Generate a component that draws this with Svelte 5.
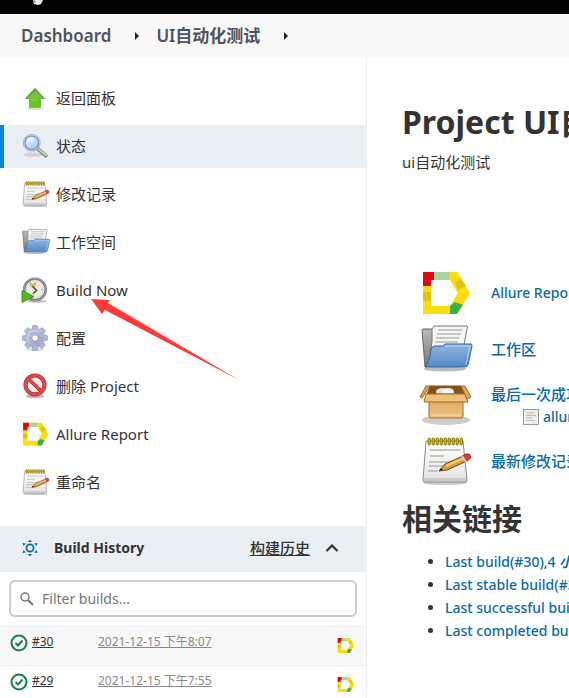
<script>
    const tasks = [
        { label: '返回面板', icon: 'up' },
        { label: '状态', icon: 'search', active: true },
        { label: '修改记录', icon: 'notepad' },
        { label: '工作空间', icon: 'folder' },
        { label: 'Build Now', icon: 'clock' },
        { label: '配置', icon: 'gear' },
        { label: '删除 Project', icon: 'forbidden' },
        { label: 'Allure Report', icon: 'allure' },
        { label: '重命名', icon: 'notepad' }
    ];

    const builds = [
        { id: '#30', date: '2021-12-15 下午8:07' },
        { id: '#29', date: '2021-12-15 下午7:55' }
    ];

    const permalinks = [
        { name: 'Last build(#30),4', age: '小时 22 分之前' },
        { name: 'Last stable build(#30),4', age: '小时 22 分之前' },
        { name: 'Last successful build(#30),4', age: '小时 22 分之前' },
        { name: 'Last completed build(#30),4', age: '小时 22 分之前' }
    ];

    const teeth = [0, 45, 90, 135, 180, 225, 270, 315];
    const rings = [7, 11, 15, 19, 23, 27, 31, 35, 39];

    let filter = $state('');
    let open = $state(true);
    let visible = $derived(builds.filter((b) => (b.id + b.date).includes(filter)));
</script>

{#snippet icon(name)}
    <svg class="icon" viewBox="0 0 48 48" aria-hidden="true">
        {#if name === 'up'}
            <ellipse cx="24" cy="43" rx="17" ry="3" fill="#ddd" />
            <path d="M24 6 42 25H34V41H14V25H6Z" fill="url(#green)" stroke="#5b9e3c" stroke-width="1.5" stroke-linejoin="round" />
            <path d="M24 9 38 24H32V31Q23 28 16 32V24H10Z" fill="#fff" opacity=".15" />
        {:else if name === 'search'}
            <ellipse cx="20" cy="40" rx="18" ry="4" fill="#cfd3d4" />
            <path d="M29 29 44 42" stroke="#8b8f8c" stroke-width="7" stroke-linecap="round" />
            <path d="M31 30 44 41" stroke="#d5d7d3" stroke-width="3" stroke-linecap="round" />
            <circle cx="18" cy="18" r="15.5" fill="#d9dddd" stroke="#9a9fa3" stroke-width="1.5" />
            <circle cx="18" cy="18" r="12.5" fill="url(#lens)" stroke="#5f8bc4" stroke-width="2" />
            <path d="M9 18Q10 9 19 9Q23 13 18 16Q13 16 9 18Z" fill="#fff" opacity=".6" />
        {:else if name === 'notepad'}
            <ellipse cx="24" cy="46" rx="22" ry="2" fill="#ccc" />
            <path d="M5 4H42L46 43Q46 45 44 45H4Q2 45 2 43Z" fill="url(#paper)" stroke="#888a85" />
            <path d="M3 41H45V44H3Z" fill="#c9cac7" />
            {#each rings as x}
                <rect {x} y="1" width="2.5" height="7" rx="1.2" fill="#d2b51b" stroke="#77670b" stroke-width=".8" />
            {/each}
            <path d="M9 13H39M9 19H23M8 25H37M8 29H25M7 34H17" stroke="#b5b6b3" stroke-width="1.3" />
            <path d="M18 34 24 27 42 19 46 24 26 33Z" fill="#d99b35" stroke="#704b16" />
            <path d="M25 29 43 21" stroke="#f7ce79" stroke-width="2" />
            <path d="M41 19 45 17Q50 16 50 21L45 25Z" fill="#df3b32" stroke="#a11d20" stroke-width=".7" />
            <path d="M41 19 45 25" stroke="#ccd" stroke-width="2" />
            <path d="M18 34 20 31 22 33Z" fill="#222" />
        {:else if name === 'folder'}
            <ellipse cx="24" cy="44" rx="21" ry="2.5" fill="#bbb" />
            <path d="M1 5Q1 4 2 4H14L16 8H41V36L4 42Z" fill="url(#steel)" stroke="#666" />
            <path d="M13 1H46Q47 2 46 4L41 30H9Q12 16 11 4Z" fill="#f5f5f4" stroke="#777" />
            <path d="M17 5H41M16 9H40M15 13H38M14 17H37" stroke="#b9b9b9" stroke-width="1.5" />
            <path d="M24 19H50Q51 19 51 21L47 40Q46 42 44 42H4Q8 38 10 25Q10 22 13 21H22Z" fill="url(#blue)" stroke="#3465a4" />
            <path d="M24 21H49L45 40" fill="none" stroke="#b8d2ef" />
        {:else if name === 'clock'}
            <ellipse cx="28" cy="45" rx="17" ry="2" fill="#bbb" />
            <circle cx="24" cy="23" r="20" fill="#ececdf" stroke="#77728d" stroke-width="4.5" />
            <circle cx="24" cy="23" r="20.5" fill="none" stroke="#aaa6bb" stroke-width="1.5" />
            <circle cx="24" cy="23" r="16" fill="none" stroke="#c8c5b9" stroke-width="1" />
            <path d="M14 9 20 14 25 10 24 18H17Z" fill="#e9c542" stroke="#b99b3e" />
            <path d="M19 17 27 25 20 31" fill="none" stroke="#444" stroke-width="2.5" />
            <circle cx="37" cy="23" r="1.5" fill="#999" />
            <path d="M0 25 22 36 0 47Z" fill="#50bd1e" stroke="#378516" stroke-width="1.5" />
        {:else if name === 'gear'}
            <ellipse cx="24" cy="45" rx="18" ry="3" fill="#ddd" />
            {#each teeth as angle}
                <path d="M17 13 20 1H28L31 13Z" fill="#b1b8d6" stroke="#8088ad" transform="rotate({angle} 24 24)" />
            {/each}
            <circle cx="24" cy="24" r="16" fill="url(#metal)" />
            <circle cx="24" cy="24" r="10" fill="none" stroke="#a3abcd" stroke-width="2" />
            <circle cx="24" cy="24" r="6" fill="#fff" stroke="#7b83aa" stroke-width="1.5" />
        {:else if name === 'forbidden'}
            <ellipse cx="24" cy="43" rx="17" ry="3.5" fill="#bbb" />
            <circle cx="24" cy="22" r="17.5" fill="#f4eeee" stroke="#b8252a" stroke-width="7.5" />
            <path d="M11 10 37 35" stroke="#bd1d22" stroke-width="6.5" />
            <circle cx="24" cy="22" r="17.5" fill="none" stroke="#dc4a4f" stroke-width="5" />
            <path d="M11 10 37 35" stroke="#dc4a4f" stroke-width="4.5" />
        {:else if name === 'allure'}
            <path fill-rule="evenodd" d="M2 3H36L49 24 36 45H2ZM10 11V37H29L37 24 29 11Z" fill="#ffdc0a" />
            <path d="M13 3H28V11H13Z" fill="#a8d4a4" />
            <path d="M2 3H13V11H10V17H2Z" fill="#e30613" />
            <path d="M2 23H10V32H2Z" fill="#dfc510" />
            <path d="M34 13 40 9 45 17 37 21Z" fill="#dfc510" />
            <path d="M29 37 34 33 42 36 36 45H29Z" fill="#3fae49" />
        {:else if name === 'box'}
            <ellipse cx="25" cy="39" rx="24" ry="5" fill="#ccc" />
            <path d="M9 5H40L45 17H5Z" fill="#81531f" stroke="#8f5902" />
            <ellipse cx="21" cy="11" rx="6" ry="4" fill="#e2e2e2" />
            <ellipse cx="27" cy="11" rx="6" ry="4" fill="#f5f5f5" />
            <path d="M8 13H42V35Q42 37 40 37H10Q8 37 8 35Z" fill="url(#carton)" stroke="#a46b20" />
            <path d="M5 13H44L47 21H3Z" fill="#edc17a" stroke="#a46b20" />
            <path d="M9 5 1 17 -1 16 5 5ZM40 5H44L50 16 46 18Z" fill="#d9a55c" stroke="#a46b20" />
            <path d="M10 34H40" stroke="#f9d99f" />
        {/if}
    </svg>
{/snippet}

<svg class="defs" aria-hidden="true">
    <defs>
        <linearGradient id="green" x2="0" y2="1"><stop stop-color="#5d9f36" /><stop offset="1" stop-color="#66d50c" /></linearGradient>
        <linearGradient id="lens" x2="1" y2="1"><stop stop-color="#f1f7ff" /><stop offset="1" stop-color="#9fc2ec" /></linearGradient>
        <linearGradient id="paper" x2="0" y2="1"><stop stop-color="#fff" /><stop offset="1" stop-color="#e3e3e1" /></linearGradient>
        <linearGradient id="steel" x2="0" y2="1"><stop stop-color="#b8bab7" /><stop offset="1" stop-color="#777" /></linearGradient>
        <linearGradient id="blue" x2="0" y2="1"><stop stop-color="#8fb6e2" /><stop offset="1" stop-color="#5488c4" /></linearGradient>
        <linearGradient id="metal" x2="1" y2="1"><stop stop-color="#d6dbee" /><stop offset="1" stop-color="#939bc0" /></linearGradient>
        <linearGradient id="carton" x2="0" y2="1"><stop stop-color="#d8a254" /><stop offset="1" stop-color="#eec382" /></linearGradient>
    </defs>
</svg>

<header class="top-bar">
    <svg class="logo" viewBox="0 0 12 5" aria-hidden="true">
        <path d="M1 0H11L9 4 6 5 2 4Z" fill="#eee" />
        <path d="M1 0H3L4 2 2 3Z" fill="#bb9d91" />
    </svg>
</header>

<nav class="breadcrumbs" aria-label="Breadcrumbs">
    <a href="#dashboard">Dashboard</a>
    <span class="caret"></span>
    <a href="#job">UI自动化测试</a>
    <span class="caret"></span>
</nav>

<div class="page">
    <aside class="side-panel">
        <nav class="tasks" aria-label="Tasks">
            {#each tasks as task}
                <a class="task" class:active={task.active} href="#task">
                    {@render icon(task.icon)}
                    <span>{task.label}</span>
                </a>
            {/each}
        </nav>

        <section class="history">
            <div class="history-header">
                <svg class="weather" viewBox="0 0 16 18" aria-hidden="true">
                    <circle cx="8" cy="9" r="3.6" fill="none" stroke="#0b6aa2" stroke-width="1.8" />
                    <path d="M6 3 8 .5 10 3ZM6 15 8 17.500 10 15ZM.5 4 4 4.500 1.500 7ZM15.500 4 12 4.500 14.500 7ZM.5 14 4 13.500 1.500 11ZM15.500 14 12 13.500 14.500 11Z" fill="#0b6aa2" />
                </svg>
                <h2>Build History</h2>
                <a class="trend" href="#trend">构建历史</a>
                <button class="toggle" aria-label="Toggle build history" onclick={() => (open = !open)}>
                    <svg viewBox="0 0 14 10" aria-hidden="true"><path d="M1.500 8 7 2.500 12.500 8" fill="none" stroke="#333" stroke-width="2.200" /></svg>
                </button>
            </div>

            {#if open}
                <label class="filter">
                    <svg viewBox="0 0 14 14" aria-hidden="true">
                        <circle cx="5" cy="5" r="4" fill="none" stroke="#777" stroke-width="1.500" />
                        <path d="M8 8 13 13" stroke="#777" stroke-width="2" />
                    </svg>
                    <input type="text" placeholder="Filter builds..." aria-label="Filter builds" bind:value={filter} />
                </label>

                <table class="builds">
                    <tbody>
                        {#each visible as build}
                            <tr>
                                <td class="number">
                                    <div>
                                        <svg viewBox="0 0 18 18" aria-label="Success" role="img">
                                            <circle cx="9" cy="9" r="7.500" fill="none" stroke="#138347" stroke-width="2" />
                                            <path d="M5.500 9 8 11.500 12.500 6.500" fill="none" stroke="#138347" stroke-width="2" />
                                        </svg>
                                        <a href="#build">{build.id}</a>
                                    </div>
                                </td>
                                <td><a class="date" href="#build">{build.date}</a></td>
                                <td class="badge"><a href="#allure" aria-label="Allure Report">{@render icon('allure')}</a></td>
                            </tr>
                        {/each}
                    </tbody>
                </table>
            {/if}
        </section>
    </aside>

    <main class="main-panel">
        <h1>Project UI自动化测试</h1>
        <p class="description">ui自动化测试</p>

        <div class="summary">
            <div class="summary-row">
                {@render icon('allure')}
                <a href="#allure">Allure Report</a>
            </div>
            <div class="summary-row">
                {@render icon('folder')}
                <a class="cjk" href="#workspace">工作区</a>
            </div>
            <div class="summary-row">
                {@render icon('box')}
                <div>
                    <a class="cjk" href="#artifacts">最后一次成功的构建结果</a>
                    <div class="artifact">
                        <svg viewBox="0 0 16 16" aria-hidden="true">
                            <rect x=".5" y=".5" width="15" height="15" fill="#eee" stroke="#999" />
                            <path d="M3 4H11M3 6.500H13M3 9H9M3 11.500H12" stroke="#bbb" />
                        </svg>
                        <a href="#zip">allure-report.zip</a>
                    </div>
                </div>
            </div>
            <div class="summary-row">
                {@render icon('notepad')}
                <a class="cjk" href="#changes">最新修改记录</a>
            </div>
        </div>

        <h2 class="links-title">相关链接</h2>
        <ul class="permalinks">
            {#each permalinks as link}
                <li><a href="#build">{link.name} <em>{link.age}</em></a></li>
            {/each}
        </ul>
    </main>
</div>

<svg class="pointer" viewBox="0 0 148 81" aria-hidden="true">
    <path d="M0 0 19 1 17 4 148 81 14 11 11 15Z" fill="#fd3b38" />
</svg>

<style>
    :global(body) {
        margin: 0;
        background: #fff;
        color: #333;
        font-family: "Noto Sans", "Noto Sans CJK SC", sans-serif;
        font-size: 14px;
        line-height: 22px;
        overflow: hidden;
    }

    a {
        color: inherit;
        text-decoration: none;
    }

    h1,
    h2,
    p,
    ul {
        margin: 0;
    }

    .defs {
        position: absolute;
        width: 0;
        height: 0;
    }

    .icon {
        flex: none;
        display: block;
        width: 26px;
        height: 26px;
        overflow: visible;
    }

    .top-bar {
        height: 14px;
        padding-left: 32px;
        background: #000;
    }

    .logo {
        display: block;
        width: 12px;
        height: 5px;
    }

    .breadcrumbs {
        display: flex;
        align-items: center;
        height: 44px;
        padding: 0 21px;
        background: #f8f8f8;
        color: #4d545d;
        font-size: 17px;
        font-weight: 600;
    }

    .caret {
        margin: 0 17px 0 24px;
        border: 4px solid transparent;
        border-left: 4px solid #222;
        border-right: 0;
    }

    .page {
        display: flex;
        align-items: stretch;
    }

    .side-panel {
        flex: none;
        box-sizing: border-box;
        width: 367px;
        border-right: 1px solid #eaeff2;
    }

    .tasks {
        display: flex;
        flex-direction: column;
        gap: 5px;
        padding: 19px 0 22px;
    }

    .task {
        display: flex;
        align-items: center;
        gap: 8px;
        box-sizing: border-box;
        height: 43px;
        padding: 0 0 2px 18px;
        border-left: 4px solid transparent;
        font-size: 15px;
    }

    .task.active {
        border-left-color: #0b86d4;
        background: #e9eff2;
    }

    .history-header {
        display: flex;
        align-items: center;
        box-sizing: border-box;
        height: 46px;
        padding: 0 25px 2px 22px;
        background: #e9eff2;
        font-size: 15px;
    }

    .history-header h2 {
        flex: 1;
        margin-left: 16px;
        font-size: 14px;
        font-weight: 700;
    }

    .weather {
        width: 16px;
        height: 18px;
    }

    .trend {
        font-weight: 500;
        text-decoration: underline;
    }

    .toggle {
        display: flex;
        margin-left: 13px;
        padding: 2px;
        border: 0;
        background: none;
    }

    .toggle svg {
        width: 14px;
        height: 10px;
    }

    .filter {
        display: flex;
        align-items: center;
        box-sizing: border-box;
        height: 37px;
        margin: 8px 9px 9px;
        padding: 0 9px;
        border: 2px solid #ccc;
        border-radius: 6px;
    }

    .filter svg {
        width: 14px;
        height: 14px;
    }

    .filter input {
        flex: 1;
        min-width: 0;
        margin-left: 8px;
        padding: 0;
        border: 0;
        outline: 0;
        background: none;
        font: inherit;
    }

    .filter input::placeholder {
        color: #757575;
    }

    .builds {
        width: 100%;
        border-collapse: collapse;
        table-layout: fixed;
        font-size: 12px;
        line-height: 20px;
    }

    .builds tr {
        height: 39px;
        border-top: 1px solid #e9eff2;
    }

    .builds tr:nth-child(odd) {
        background: #f8f8f8;
    }

    .builds td {
        padding: 5px 0 0;
        vertical-align: top;
    }

    .builds a {
        text-decoration: underline;
    }

    .builds .number {
        width: 98px;
    }

    .number div {
        display: flex;
        gap: 4px;
        padding-left: 10px;
    }

    .number svg {
        width: 18px;
        height: 18px;
        margin-top: 2px;
    }

    .date {
        color: #888;
    }

    .builds .badge {
        width: 29px;
        padding-top: 10px;
    }

    .badge .icon {
        width: 17px;
        height: 17px;
    }

    .main-panel {
        flex: 1;
        min-width: 0;
        padding: 43px 0 0 35px;
        overflow: hidden;
        white-space: nowrap;
    }

    h1 {
        font-size: 32px;
        font-weight: 700;
        line-height: 42px;
    }

    .description {
        margin-top: 8px;
        font-size: 15px;
    }

    .summary {
        margin-top: 92px;
        padding-left: 19px;
        color: #0b6aa2;
        font-weight: 500;
    }

    .summary-row {
        display: flex;
        align-items: center;
        gap: 22px;
        height: 56px;
    }

    .summary-row .icon {
        width: 48px;
        height: 48px;
    }

    .summary-row .cjk {
        font-size: 15px;
    }

    .artifact {
        display: flex;
        align-items: center;
        gap: 4px;
        padding-left: 32px;
    }

    .artifact svg {
        width: 16px;
        height: 16px;
    }

    .links-title {
        margin-top: 8px;
        font-size: 30px;
        font-weight: 700;
        line-height: 44px;
    }

    .permalinks {
        margin-top: 9px;
        padding-left: 43px;
        line-height: 23px;
    }

    .permalinks a {
        color: #0b6aa2;
        font-weight: 500;
    }

    .permalinks em {
        font-weight: 700;
    }

    /* annotation drawn over the task list */
    .pointer {
        position: absolute;
        top: 299px;
        left: 91px;
        width: 148px;
        height: 81px;
        pointer-events: none;
    }
</style>
